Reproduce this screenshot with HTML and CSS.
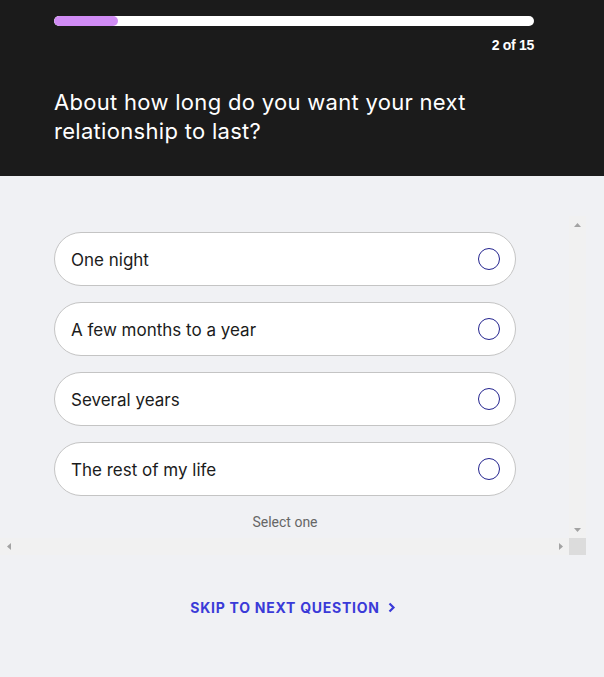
FILE: index.html
```html
<!DOCTYPE html>
<html>
<head>
<meta charset="utf-8">
<link rel="stylesheet" href="styles.css">
</head>
<body>
<header class="header">
  <div class="progress"><div class="progress-fill" style="width:13.33%"></div></div>
  <div class="count">2 of 15</div>
  <h1 class="question">About how long do you want your next relationship to last?</h1>
</header>
<main class="main">
  <div class="scrollbox">
    <div class="viewport">
      <div class="options">
        <label class="option"><span class="option-text">One night</span><span class="radio"></span></label>
        <label class="option"><span class="option-text">A few months to a year</span><span class="radio"></span></label>
        <label class="option"><span class="option-text">Several years</span><span class="radio"></span></label>
        <label class="option"><span class="option-text">The rest of my life</span><span class="radio"></span></label>
      </div>
      <div class="hint">Select one</div>
    </div>
    <div class="vbar">
      <svg width="17" height="17" viewBox="0 0 17 17"><polygon points="5,11 12,11 8.5,7" fill="#a3a3a3"/></svg>
      <svg width="17" height="17" viewBox="0 0 17 17"><polygon points="5,7 12,7 8.5,11" fill="#a3a3a3"/></svg>
    </div>
    <div class="hbar">
      <svg width="17" height="17" viewBox="0 0 17 17"><polygon points="11,5 11,12 7,8.5" fill="#a3a3a3"/></svg>
      <svg width="17" height="17" viewBox="0 0 17 17"><polygon points="7,5 7,12 11,8.5" fill="#a3a3a3"/></svg>
    </div>
    <div class="corner"></div>
  </div>
  <div class="skip">SKIP TO NEXT QUESTION
    <svg class="chev" width="8" height="11" viewBox="0 0 8 11"><path d="M1.5 1.5 L5.5 5.5 L1.5 9.5" fill="none" stroke="currentColor" stroke-width="2.2"/></svg>
  </div>
</main>
</body>
</html>
```
FILE: styles.css
```css
html, body { margin: 0; padding: 0; }
body {
  background: #f0f1f4;
  font-family: Inter, "Noto Sans", sans-serif;
  width: 604px;
  height: 677px;
  overflow: hidden;
}
.header {
  background: #1b1b1b;
  height: 176px;
  box-sizing: border-box;
  padding: 16px 70px 0 54px;
  color: #fff;
}
.progress {
  height: 10px;
  border-radius: 5px;
  background: #fff;
  overflow: hidden;
}
.progress-fill {
  height: 100%;
  background: #d08cf4;
  border-radius: 5px;
}
.count {
  text-align: right;
  font-family: "Liberation Sans", Arial, sans-serif;
  font-weight: bold;
  font-size: 14px;
  margin-top: 11px;
  letter-spacing: -0.3px;
}
.question {
  margin: 35px 0 0;
  font-size: 22px;
  font-weight: 400;
  line-height: 29px;
  letter-spacing: 0.3px;
}
.main {
  padding-top: 40px;
}
.scrollbox {
  display: grid;
  grid-template-columns: 569px 17px;
  grid-template-rows: 322px 17px;
  width: 586px;
}
.viewport {
  overflow: hidden;
  padding-top: 16px;
  box-sizing: border-box;
}
.vbar {
  background: #f1f1f1;
  display: flex;
  flex-direction: column;
  justify-content: space-between;
}
.hbar {
  background: #f1f1f1;
  display: flex;
  justify-content: space-between;
}
.vbar svg, .hbar svg { display: block; }
.corner { background: #dcdcdc; }
.options {
  display: flex;
  flex-direction: column;
  gap: 16px;
  margin-left: 54px;
  width: 462px;
}
.option {
  display: flex;
  align-items: center;
  justify-content: space-between;
  height: 54px;
  box-sizing: border-box;
  border: 1px solid #c4c4c4;
  border-radius: 27px;
  background: #fff;
  padding: 1px 15px 0 16px;
}
.option-text {
  font-size: 17px;
  color: #1b1b1b;
}
.radio {
  width: 22px;
  height: 22px;
  box-sizing: border-box;
  border: 1.5px solid #24248f;
  border-radius: 50%;
  margin-top: -1px;
}
.hint {
  margin-left: 54px;
  width: 462px;
  text-align: center;
  font-family: Roboto, sans-serif;
  font-size: 14px;
  color: #666;
  margin-top: 18px;
}
.skip {
  display: flex;
  align-items: center;
  justify-content: center;
  gap: 8px;
  width: 586px;
  margin-top: 44px;
  color: #3a3ad8;
  font-weight: 700;
  font-size: 14px;
  letter-spacing: 0.75px;
}
.chev { display: block; }
```
